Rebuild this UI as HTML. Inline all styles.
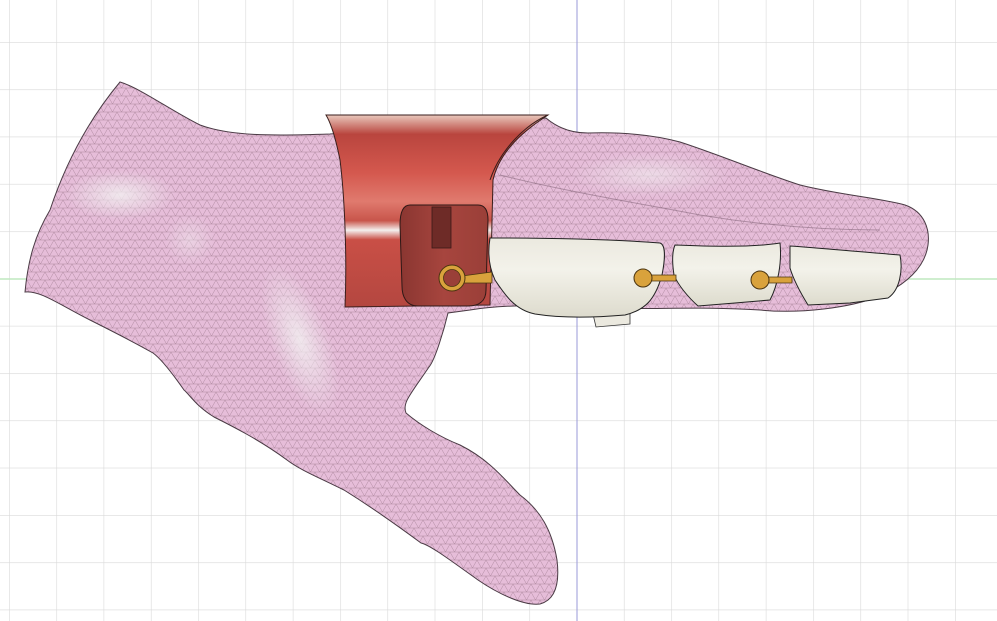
<!DOCTYPE html>
<html><head><meta charset="utf-8"><style>
html,body{margin:0;padding:0;background:#fff;width:997px;height:621px;overflow:hidden}
svg{display:block}
</style></head><body>
<svg width="997" height="621" viewBox="0 0 997 621" xmlns="http://www.w3.org/2000/svg">
<defs>
<pattern id="grid" width="47.3" height="47.3" patternUnits="userSpaceOnUse" x="9" y="42">
<path d="M0 0V47.3M0 0H47.3" stroke="#d9d9d9" stroke-width="1.2" fill="none"/>
</pattern>
<pattern id="mesh" width="9" height="8" patternUnits="userSpaceOnUse">
<rect width="9" height="8" fill="#e6bdd9"/>
<path d="M0 0L4.5 8L9 0M0 8H9M0 0H9" stroke="#a88399" stroke-width="0.45" fill="none"/>
</pattern>
<radialGradient id="hl" cx="0.5" cy="0.5" r="0.5">
<stop offset="0" stop-color="#f2eef0" stop-opacity="0.85"/>
<stop offset="1" stop-color="#f2eef0" stop-opacity="0"/>
</radialGradient>
<linearGradient id="band" x1="0" y1="0" x2="0" y2="1">
<stop offset="0" stop-color="#e9c8bc"/>
<stop offset="0.1" stop-color="#b9453e"/>
<stop offset="0.3" stop-color="#d4584e"/>
<stop offset="0.45" stop-color="#e07a6e"/>
<stop offset="0.55" stop-color="#c8554b"/>
<stop offset="0.6" stop-color="#f4f0ee"/>
<stop offset="0.65" stop-color="#c94f46"/>
<stop offset="1" stop-color="#b44740"/>
</linearGradient>
<linearGradient id="blk" x1="0" y1="0" x2="1" y2="0">
<stop offset="0" stop-color="#8a3631"/>
<stop offset="0.5" stop-color="#a7453e"/>
<stop offset="1" stop-color="#9a3f38"/>
</linearGradient>
<linearGradient id="cream" x1="0" y1="0" x2="0" y2="1">
<stop offset="0" stop-color="#ebe9df"/>
<stop offset="0.4" stop-color="#f3f2ea"/>
<stop offset="1" stop-color="#dddbcd"/>
</linearGradient>
</defs>
<rect width="997" height="621" fill="#fff"/>
<rect width="997" height="621" fill="url(#grid)"/>
<line x1="577" y1="0" x2="577" y2="621" stroke="#9a9ad8" stroke-width="1"/>
<line x1="0" y1="279" x2="997" y2="279" stroke="#bfe8bf" stroke-width="1.5"/>

<path d="M25 292 C28 260 35 235 50 210 C60 180 80 130 120 82 C140 88 170 110 200 125 C230 136 270 136 330 134 L546 118 C560 130 575 133 588 133 C620 132 650 134 680 142 C720 155 760 172 800 185 C840 195 880 198 905 205 C925 212 930 230 928 245 C925 268 905 285 880 296 C850 308 800 314 760 310 C700 306 650 310 600 308 C540 304 500 305 470 310 L448 313 C444 330 435 360 429 367 C410 395 402 403 406 413 C420 425 440 437 460 445 C490 460 505 480 520 495 C540 510 552 530 557 560 C560 585 555 600 540 604 C525 606 500 595 478 580 C450 560 430 545 421 543 C390 520 360 500 344 490 C320 478 300 470 287 460 C260 440 230 425 214 417 C195 405 190 395 184 390 C170 370 160 358 153 353 C130 340 110 330 90 320 C60 305 40 290 25 292 Z" fill="url(#mesh)" stroke="#4a3a44" stroke-width="1"/>
<ellipse cx="120" cy="195" rx="55" ry="25" fill="url(#hl)"/>
<ellipse cx="300" cy="340" rx="30" ry="80" fill="url(#hl)" transform="rotate(-20 300 340)"/>
<ellipse cx="650" cy="175" rx="80" ry="22" fill="url(#hl)" opacity="0.7"/>
<ellipse cx="190" cy="240" rx="25" ry="25" fill="url(#hl)" opacity="0.5"/>
<path d="M500 175 C560 190 620 200 700 215 C760 225 820 230 880 230" stroke="#7a5b70" stroke-width="1" fill="none" opacity="0.5"/>

<path d="M326 115 L548 115 C525 130 500 150 493 180 L490 305 L345 307 C347 260 345 200 340 160 C336 140 332 125 326 115 Z" fill="url(#band)" stroke="#3a1e1c" stroke-width="1"/>
<path d="M548 115 C525 125 500 150 490 180" stroke="#3a1e1c" fill="none"/>
<path d="M410 205 L478 205 C486 205 488 212 488 220 L486 290 C486 302 478 306 468 306 L418 306 C406 306 402 296 402 286 L400 225 C400 212 403 205 410 205 Z" fill="url(#blk)" stroke="#2e1816" stroke-width="1"/>
<rect x="432" y="207" width="19" height="41" fill="#6e2b27" stroke="#3a1a18" stroke-width="0.8"/>
<path d="M462 276 L492 272 L492 283 L462 283 Z" fill="#d9a23c" stroke="#4a3410" stroke-width="0.8"/>
<circle cx="452" cy="278" r="13" fill="#d9a23c" stroke="#4a3410" stroke-width="1"/>
<circle cx="452" cy="278" r="8.5" fill="#9a3f38" stroke="#4a3410" stroke-width="0.8"/>
<path d="M592 310 L630 310 L630 324 L596 327 Z" fill="#ebe9df" stroke="#333" stroke-width="0.8"/>
<path d="M490 238 C560 238 620 240 660 243 C666 245 665 260 662 275 C655 300 645 310 625 315 C590 318 560 318 535 314 C515 310 505 295 495 280 C488 265 488 250 490 238 Z" fill="url(#cream)" stroke="#222" stroke-width="1"/>
<path d="M675 245 C700 246 750 248 780 243 C782 262 778 285 770 300 L735 303 L698 306 C688 297 678 285 674 275 C672 262 672 252 675 245 Z" fill="url(#cream)" stroke="#222" stroke-width="1"/>
<path d="M790 246 C820 248 860 252 900 255 C903 270 900 290 888 298 L850 303 L808 305 C800 292 793 278 790 268 Z" fill="url(#cream)" stroke="#222" stroke-width="1"/>
<path d="M648 275 L676 275 L676 281 L648 281 Z" fill="#d9a23c" stroke="#4a3410" stroke-width="0.8"/>
<circle cx="643" cy="278" r="9" fill="#d9a23c" stroke="#4a3410" stroke-width="1"/>
<path d="M765 277 L792 277 L792 283 L765 283 Z" fill="#d9a23c" stroke="#4a3410" stroke-width="0.8"/>
<circle cx="760" cy="280" r="9" fill="#d9a23c" stroke="#4a3410" stroke-width="1"/>
</svg>
</body></html>
